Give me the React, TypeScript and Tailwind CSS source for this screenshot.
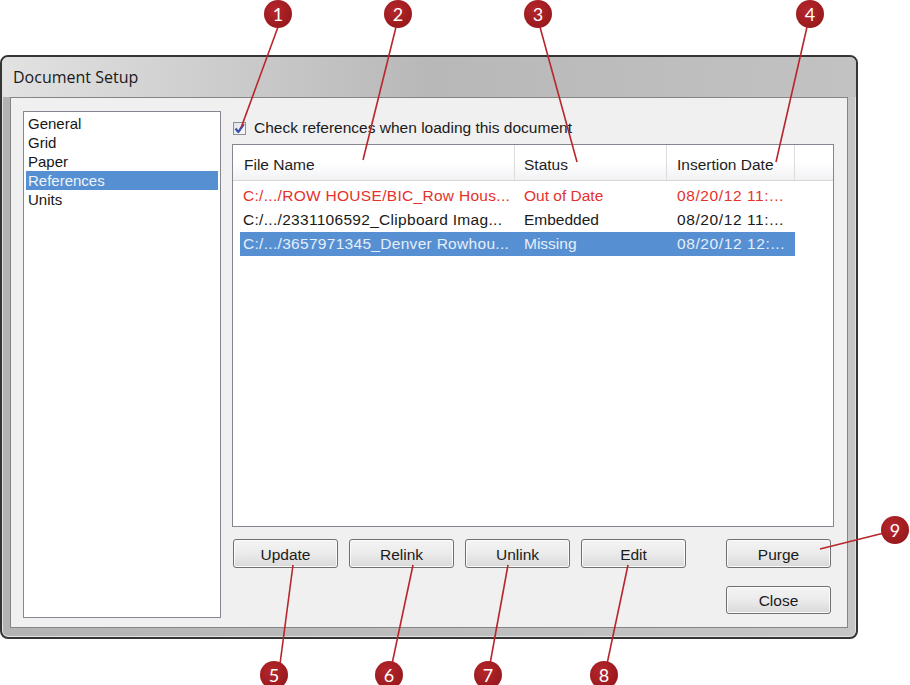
import React from "react";

const navItems = ["General", "Grid", "Paper", "References", "Units"];

const rows = [
  { file: "C:/.../ROW HOUSE/BIC_Row Hous...", status: "Out of Date", date: "08/20/12 11:...", tone: "red" },
  { file: "C:/.../2331106592_Clipboard Imag...", status: "Embedded", date: "08/20/12 11:...", tone: "plain" },
  { file: "C:/.../3657971345_Denver Rowhou...", status: "Missing", date: "08/20/12 12:...", tone: "selected" },
];

const callouts = [
  { n: 1, cx: 278, cy: 14 },
  { n: 2, cx: 398, cy: 14 },
  { n: 3, cx: 538, cy: 14 },
  { n: 4, cx: 810, cy: 14 },
  { n: 5, cx: 274, cy: 675 },
  { n: 6, cx: 389, cy: 675 },
  { n: 7, cx: 488, cy: 675 },
  { n: 8, cx: 604, cy: 675 },
  { n: 9, cx: 895, cy: 530 },
];

const leaders = [
  [278, 27, 241, 128],
  [396, 27, 363, 160],
  [540, 27, 577, 162],
  [807, 27, 776, 162],
  [293, 565, 280, 664],
  [413, 565, 392, 664],
  [508, 565, 490, 664],
  [628, 565, 607, 664],
  [820, 549, 884, 533],
];

function WinButton({ label }: { label: string }) {
  return (
    <button className="w-[105px] h-full pt-[2px] rounded-[3px] border border-[#707070] bg-gradient-to-b from-[#f4f4f4] via-[#ebebeb] to-[#d9d9d9] text-[15.5px] text-[#1b1b1b] shadow-[inset_0_0_0_1px_#fbfbfb]">
      {label}
    </button>
  );
}

export default function App() {
  return (
    <div className="relative w-[910px] h-[685px] overflow-hidden bg-white pt-[55px] font-['Liberation_Sans',Arial,sans-serif]">
      {/* dialog window */}
      <div className="w-[858px] h-[584px] flex flex-col rounded-[8px] border-2 border-[#353535] bg-gradient-to-r from-[#b3b3b3] via-[#bdbdbd] to-[#c6c6c6] shadow-[inset_0_0_0_1px_#e2e2e2]">
        <div className="h-[40px] shrink-0 flex items-center pl-[11px] rounded-t-[6px] bg-gradient-to-r from-[#e2e2e2] via-[#b8b8b8] to-[#c2c2c2] text-[16px] text-[#1a1a1a] font-['Open_Sans',sans-serif]">
          Document Setup
        </div>

        <div className="mx-[8px] h-[531px] flex bg-[#f0f0f0] border border-[#858585] pl-[12px] pt-[13px]">
          {/* left nav list */}
          <div className="w-[198px] h-[507px] border border-[#828790] bg-white px-[2px] pt-[2px] text-[15px] text-[#161616]">
            {navItems.map((item) => (
              <div
                key={item}
                className={
                  item === "References"
                    ? "h-[19px] leading-[19px] pl-[2px] bg-[#5690d2] text-[#eef3fb]"
                    : "h-[19px] leading-[19px] pl-[2px]"
                }
              >
                {item}
              </div>
            ))}
          </div>

          {/* right side */}
          <div className="ml-[11px] w-[602px] flex flex-col">
            <div className="mt-[9px] h-[16px] flex items-center gap-[8px] pl-[1px] text-[15.5px] text-[#1a1a1a]">
              <span className="w-[13px] h-[13px] border border-[#8e8f8f] bg-gradient-to-br from-[#dfe3ea] to-[#f7f8fa] flex items-center justify-center">
                <svg width="11" height="11" viewBox="0 0 11 11">
                  <path d="M1.5 5.5 L4.3 9 L9.8 1.2" fill="none" stroke="#3b4fae" strokeWidth="2.2" strokeLinejoin="round" />
                </svg>
              </span>
              <span>Check references when loading this document</span>
            </div>

            {/* list view */}
            <div className="mt-[8px] h-[383px] border border-[#828790] bg-white">
              <div className="h-[36px] flex border-b border-[#d5d5d5] bg-gradient-to-b from-white via-white to-[#f1f2f4] text-[15.5px] text-[#1e1e1e]">
                <div className="w-[282px] flex items-center pt-[4px] pl-[11px] border-r border-[#dcdcdc]">File Name</div>
                <div className="w-[152px] flex items-center pt-[4px] pl-[9px] border-r border-[#dcdcdc]">Status</div>
                <div className="w-[128px] flex items-center pt-[4px] pl-[10px] border-r border-[#dcdcdc]">Insertion Date</div>
                <div className="flex-1" />
              </div>
              <div className="pt-[3px] pl-[7px]">
                {rows.map((r) => (
                  <div
                    key={r.file}
                    className={
                      r.tone === "selected"
                        ? "w-[555px] h-[24px] flex items-center text-[15.5px] bg-[#5690d2] text-[#e6eef9]"
                        : r.tone === "red"
                        ? "w-[555px] h-[24px] flex items-center text-[15.5px] text-[#e4322b]"
                        : "w-[555px] h-[24px] flex items-center text-[15.5px] text-[#1a1a1a]"
                    }
                  >
                    <div className="w-[275px] pl-[3px] whitespace-nowrap tracking-[0.3px]">{r.file}</div>
                    <div className="w-[152px] pl-[9px]">{r.status}</div>
                    <div className="w-[128px] pl-[10px] whitespace-nowrap tracking-[0.6px]">{r.date}</div>
                  </div>
                ))}
              </div>
            </div>

            <div className="mt-[12px] h-[29px] flex gap-[11px] pl-[1px] pr-[3px]">
              <WinButton label="Update" />
              <WinButton label="Relink" />
              <WinButton label="Unlink" />
              <WinButton label="Edit" />
              <div className="ml-auto h-full">
                <WinButton label="Purge" />
              </div>
            </div>
            <div className="mt-[18px] h-[28px] flex justify-end pr-[3px]">
              <WinButton label="Close" />
            </div>
          </div>
        </div>
      </div>

      {/* callout leaders */}
      <svg className="absolute left-0 top-0 pointer-events-none" width="910" height="685">
        {leaders.map(([x1, y1, x2, y2], i) => (
          <line key={i} x1={x1} y1={y1} x2={x2} y2={y2} stroke="#b8262c" strokeWidth="1.6" />
        ))}
      </svg>
      {callouts.map((c) => (
        <div
          key={c.n}
          className="absolute w-[28px] h-[28px] rounded-full bg-[radial-gradient(circle_at_40%_35%,#b5262b,#8e1519)] text-white text-[18px] flex items-center justify-center font-['Lato',sans-serif]"
          style={{ left: c.cx - 14, top: c.cy - 14 }}
        >
          {c.n}
        </div>
      ))}
    </div>
  );
}
